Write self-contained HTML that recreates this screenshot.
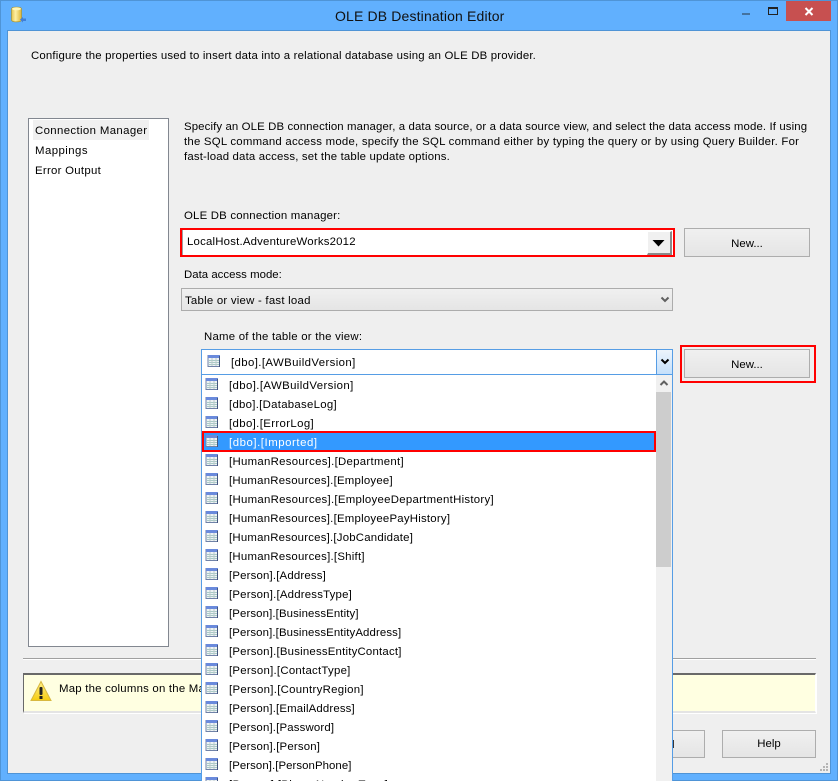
<!DOCTYPE html>
<html><head><meta charset="utf-8"><style>
html,body{margin:0;padding:0;background:#61b0fe}
#w{position:relative;width:838px;height:781px;overflow:hidden;background:#61b0fe;font:11.4px "Liberation Sans",sans-serif;color:#000}
#w div,#w svg{position:absolute;box-sizing:border-box}
.t{white-space:nowrap;line-height:14px;height:14px}
.btn{border:1px solid #adadad;background:linear-gradient(#f0f0f0,#e5e5e5);text-align:center}
.r{left:229px}
.i{left:205px;width:13px;height:12px}
</style></head><body><div id="w">
<svg width="0" height="0" style="position:absolute"><defs><symbol id="tb" viewBox="0 0 13 12"><rect x="1" y=".5" width="11.500" height="11" fill="#eef3f5" stroke="#6f82a8"/><rect x="1" y="0" width="12" height="3" fill="#6a8adc"/><path d="M2 5.500h10M2 7.500h10M2 9.500h10" stroke="#a9cbc6"/><path d="M5 3v8M9 3v8" stroke="#bccacc"/><rect x="12" y="1" width="1" height="11" fill="#44567e"/></symbol></defs></svg>

<div style="left:0;top:0;width:838px;height:781px;border:1px solid #4f94d6"></div>
<svg style="left:11px;top:6px" width="15" height="17" viewBox="0 0 15 17"><defs><linearGradient id="c" x1="0" x2="1" y1="0" y2="0"><stop offset="0" stop-color="#e4c24a"/><stop offset=".4" stop-color="#fdf0a4"/><stop offset="1" stop-color="#dcb436"/></linearGradient></defs><path d="M.5 3C.5 .5 10.500 .5 10.500 3V14C10.500 16.500 .5 16.500 .5 14Z" fill="url(#c)" stroke="#a89434" stroke-width=".7"/><ellipse cx="5.500" cy="2.800" rx="4.500" ry="1.500" fill="#fff6b8"/><path d="M9 13.500l3-2.500v1.500h3v2.500h-3v1.500z" fill="#3f7fd8"/></svg>
<div class="t" style="left:335px;top:9px;font-size:14px;color:#111;letter-spacing:.15px">OLE DB Destination Editor</div>
<div style="left:786px;top:1px;width:45px;height:20px;background:#c75050"></div>
<svg style="left:804px;top:7px" width="10" height="9" viewBox="0 0 10 9"><path d="M1.500 1l7 7M8.500 1l-7 7" stroke="#fff" stroke-width="2"/></svg>
<div style="left:742px;top:13px;width:8px;height:2px;background:#44729f"></div>
<div style="left:768px;top:7px;width:10px;height:8px;border:1px solid #222;border-top-width:2px"></div>

<div style="left:7px;top:30px;width:824px;height:744px;background:#efefef;border:1px solid #4f94d6"></div>
<div class="t" style="left:31px;top:49px;letter-spacing:.18px">Configure the properties used to insert data into a relational database using an OLE DB provider.</div>

<div style="left:28px;top:118px;width:141px;height:529px;background:#fff;border:1px solid #828790"></div>
<div style="left:33px;top:120px;width:116px;height:20px;background:#f0f0f0"></div>
<div class="t" style="left:35px;top:124px;letter-spacing:.37px">Connection Manager</div>
<div class="t" style="left:35px;top:144px;letter-spacing:.45px">Mappings</div>
<div class="t" style="left:35px;top:164px;letter-spacing:.28px">Error Output</div>

<div class="t" style="left:184px;top:120px;letter-spacing:.12px">Specify an OLE DB connection manager, a data source, or a data source view, and select the data access mode. If using</div>
<div class="t" style="left:184px;top:135px;letter-spacing:.23px">the SQL command access mode, specify the SQL command either by typing the query or by using Query Builder. For</div>
<div class="t" style="left:184px;top:150px;letter-spacing:.17px">fast-load data access, set the table update options.</div>

<div class="t" style="left:184px;top:209px;letter-spacing:.2px">OLE DB connection manager:</div>
<div style="left:180px;top:228px;width:495px;height:29px;background:#fff;border:2px solid #f00"></div>
<div style="left:182px;top:230px;width:1px;height:25px;background:#a0a0a0"></div>
<div class="t" style="left:187px;top:235px;letter-spacing:.2px">LocalHost.AdventureWorks2012</div>
<div style="left:647px;top:231px;width:25px;height:24px;background:#f0f0f0;border-top:1px solid #fff;border-left:1px solid #fff;border-right:2px solid #8a8a8a;border-bottom:2px solid #8a8a8a"></div>
<svg style="left:652px;top:239px" width="14" height="9"><path d="M.5 1h12L6.500 7.500z" fill="#000"/></svg>
<div class="btn t" style="left:684px;top:228px;width:126px;height:29px;line-height:30px">New...</div>

<div class="t" style="left:184px;top:268px;letter-spacing:.02px">Data access mode:</div>
<div style="left:181px;top:288px;width:492px;height:23px;border:1px solid #acacac;background:linear-gradient(#f0f0f0,#e5e5e5)"></div>
<div class="t" style="left:185px;top:294px;letter-spacing:.24px">Table or view - fast load</div>
<svg style="left:660px;top:296px" width="10" height="8"><path d="M1.500 1.500L5 5l3.500-3.500" fill="none" stroke="#606060" stroke-width="2"/></svg>

<div class="t" style="left:204px;top:330px;letter-spacing:.23px">Name of the table or the view:</div>
<div style="left:201px;top:349px;width:472px;height:26px;background:#fff;border:1px solid #569de5"></div>
<div style="left:656px;top:350px;width:16px;height:24px;background:linear-gradient(#ecf4fc,#c5e0fb);border-left:1px solid #569de5"></div>
<svg style="left:660px;top:358px" width="10" height="8"><path d="M1.500 1.500L5 5l3.500-3.500" fill="none" stroke="#000" stroke-width="2"/></svg>
<svg style="left:207px;top:355px" width="13" height="12"><use href="#tb"/></svg>
<div class="t" style="left:231px;top:356px;letter-spacing:.39px">[dbo].[AWBuildVersion]</div>

<div class="btn t" style="left:684px;top:349px;width:126px;height:29px;line-height:30px">New...</div>
<div style="left:680px;top:345px;width:136px;height:38px;border:2px solid #f00"></div>

<div style="left:23px;top:658px;width:793px;height:2px;border-top:1px solid #a0a0a0;border-bottom:1px solid #fff"></div>
<div style="left:23px;top:673px;width:793px;height:40px;background:#ffffe1;border:1px solid;border-width:2px 1px 2px 1px;border-color:#696969 #fff #e4e4e4 #696969;box-shadow:1px 1px 0 #fff"></div>
<svg style="left:30px;top:680px" width="22" height="22" viewBox="0 0 22 22"><defs><linearGradient id="y" x1="0" x2="0" y1="0" y2="1"><stop offset="0" stop-color="#fff08a"/><stop offset="1" stop-color="#f6cc10"/></linearGradient></defs><path d="M11 1.500L21 20.500H1z" fill="url(#y)" stroke="#d8b840"/><rect x="9.500" y="7" width="3" height="8" rx="1" fill="#222"/><rect x="9.500" y="16" width="3" height="3" fill="#222"/></svg>
<div class="t" style="left:59px;top:682px;letter-spacing:.22px">Map the columns on the Mappings page.</div>

<div class="btn" style="left:625px;top:730px;width:80px;height:28px"></div>
<div class="t" style="left:672px;top:738px;">l</div>
<div class="btn t" style="left:722px;top:730px;width:94px;height:28px;line-height:27px">Help</div>
<svg style="left:818px;top:762px" width="11" height="11"><path d="M8 1h2v2H8zM8 4h2v2H8zM5 4h2v2H5zM8 7h2v2H8zM5 7h2v2H5zM2 7h2v2H2z" fill="#b4b4b4"/></svg>

<div style="left:201px;top:374px;width:472px;height:407px;background:#fff;border:1px solid #569de5;border-bottom:0"></div>
<div style="left:656px;top:375px;width:16px;height:406px;background:#f0f0f0"></div>
<svg style="left:659px;top:379px" width="10" height="8"><path d="M1.500 6L5 2.500 8.500 6" fill="none" stroke="#606060" stroke-width="2"/></svg>
<div style="left:656px;top:392px;width:15px;height:175px;background:#cdcdcd"></div>

<div style="left:202px;top:431px;width:454px;height:21px;background:#3399ff;border:2px solid #f00"></div>

<svg class="i" style="top:378px"><use href="#tb"/></svg><div class="t r" style="top:379px;letter-spacing:.39px">[dbo].[AWBuildVersion]</div>
<svg class="i" style="top:397px"><use href="#tb"/></svg><div class="t r" style="top:398px;letter-spacing:.28px">[dbo].[DatabaseLog]</div>
<svg class="i" style="top:416px"><use href="#tb"/></svg><div class="t r" style="top:417px;letter-spacing:.37px">[dbo].[ErrorLog]</div>
<svg class="i" style="top:435px"><use href="#tb"/></svg><div class="t r" style="top:436px;color:#fff;letter-spacing:.55px">[dbo].[Imported]</div>
<svg class="i" style="top:454px"><use href="#tb"/></svg><div class="t r" style="top:455px;letter-spacing:.29px">[HumanResources].[Department]</div>
<svg class="i" style="top:473px"><use href="#tb"/></svg><div class="t r" style="top:474px;letter-spacing:.23px">[HumanResources].[Employee]</div>
<svg class="i" style="top:492px"><use href="#tb"/></svg><div class="t r" style="top:493px;letter-spacing:.28px">[HumanResources].[EmployeeDepartmentHistory]</div>
<svg class="i" style="top:511px"><use href="#tb"/></svg><div class="t r" style="top:512px;letter-spacing:.23px">[HumanResources].[EmployeePayHistory]</div>
<svg class="i" style="top:530px"><use href="#tb"/></svg><div class="t r" style="top:531px;letter-spacing:.22px">[HumanResources].[JobCandidate]</div>
<svg class="i" style="top:549px"><use href="#tb"/></svg><div class="t r" style="top:550px;letter-spacing:.25px">[HumanResources].[Shift]</div>
<svg class="i" style="top:568px"><use href="#tb"/></svg><div class="t r" style="top:569px;letter-spacing:.18px">[Person].[Address]</div>
<svg class="i" style="top:587px"><use href="#tb"/></svg><div class="t r" style="top:588px;letter-spacing:.21px">[Person].[AddressType]</div>
<svg class="i" style="top:606px"><use href="#tb"/></svg><div class="t r" style="top:607px;letter-spacing:.12px">[Person].[BusinessEntity]</div>
<svg class="i" style="top:625px"><use href="#tb"/></svg><div class="t r" style="top:626px;letter-spacing:.12px">[Person].[BusinessEntityAddress]</div>
<svg class="i" style="top:644px"><use href="#tb"/></svg><div class="t r" style="top:645px;letter-spacing:.21px">[Person].[BusinessEntityContact]</div>
<svg class="i" style="top:663px"><use href="#tb"/></svg><div class="t r" style="top:664px;letter-spacing:.26px">[Person].[ContactType]</div>
<svg class="i" style="top:682px"><use href="#tb"/></svg><div class="t r" style="top:683px;letter-spacing:.29px">[Person].[CountryRegion]</div>
<svg class="i" style="top:701px"><use href="#tb"/></svg><div class="t r" style="top:702px;letter-spacing:.16px">[Person].[EmailAddress]</div>
<svg class="i" style="top:720px"><use href="#tb"/></svg><div class="t r" style="top:721px;letter-spacing:.17px">[Person].[Password]</div>
<svg class="i" style="top:739px"><use href="#tb"/></svg><div class="t r" style="top:740px;letter-spacing:.18px">[Person].[Person]</div>
<svg class="i" style="top:758px"><use href="#tb"/></svg><div class="t r" style="top:759px;letter-spacing:.07px">[Person].[PersonPhone]</div>
<svg class="i" style="top:777px"><use href="#tb"/></svg><div class="t r" style="top:778px;letter-spacing:.35px">[Person].[PhoneNumberType]</div>
</div></body></html>
